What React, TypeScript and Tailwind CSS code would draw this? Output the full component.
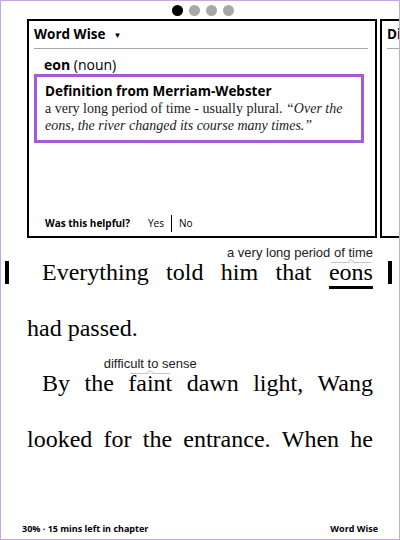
import type { ReactNode } from 'react';

const sans = "font-['Open_Sans',sans-serif]";
const serif = "font-['Liberation_Serif',serif]";

function Gloss({ children, right }: { children: ReactNode; right?: boolean }) {
  return (
    <>
      <span
        className={
          "pointer-events-none absolute top-[1px] whitespace-nowrap font-['Liberation_Sans',sans-serif] text-[13px] leading-[14px] text-[#222] no-underline " +
          (right ? 'right-0' : 'left-1/2 -translate-x-1/2')
        }
      >
        {children}
      </span>
      <span className="absolute inset-x-[2px] top-[17px] h-px bg-[#c4c4c4]" />
      <svg
        className="absolute left-1/2 top-[14px] -translate-x-1/2"
        width="7"
        height="4"
        viewBox="0 0 7 4"
      >
        <path d="M0 3.5 L3.5 0.5 L7 3.5" fill="white" stroke="#bdbdbd" strokeWidth="1" />
      </svg>
    </>
  );
}

function Card({ children, title }: { children?: ReactNode; title: string }) {
  return (
    <div className="flex h-[219px] w-[350px] shrink-0 flex-col border-2 border-black">
      <div className={`flex h-[27px] items-center pl-[5px] ${sans} text-[13.5px] font-bold text-black`}>
        <span>{title}</span>
        {title === 'Word Wise' && <span className="ml-[8px] text-[8px] leading-none">▼</span>}
      </div>
      <div className="ml-[5px] mr-[7px] h-px bg-[#a8a8a8]" />
      {children}
    </div>
  );
}

export default function App() {
  return (
    <div className="flex h-[540px] w-[400px] flex-col overflow-hidden border border-[#c9a6de] bg-white text-black">
      <div className="flex justify-center gap-[6px] pl-[5px] pt-[4px]">
        <span className="h-[11px] w-[11px] rounded-full bg-black" />
        <span className="h-[11px] w-[11px] rounded-full bg-[#a8a8a8]" />
        <span className="h-[11px] w-[11px] rounded-full bg-[#a8a8a8]" />
        <span className="h-[11px] w-[11px] rounded-full bg-[#a8a8a8]" />
      </div>

      <div className="ml-[26px] mt-[3px] flex gap-[3px]">
        <Card title="Word Wise">
          <div className={`ml-[15px] mt-[6px] h-[19px] ${sans} text-[14px] leading-[19px]`}>
            <span className="font-bold">eon</span> (noun)
          </div>
          <div className="ml-[5px] mr-[11px] h-[69px] border-[3px] border-[#a25bd8] pl-[8px] pr-[6px] pt-[5px]">
            <p className={`${sans} text-[13.5px] font-bold leading-[18px]`}>
              Definition from Merriam-Webster
            </p>
            <p className={`${serif} text-[14px] leading-[17px] text-[#1a1a1a]`}>
              a very long period of time - usually plural.{' '}
              <em>“Over the</em>
              <br />
              <em>eons, the river changed its course many times.”</em>
            </p>
          </div>
          <div className={`mt-auto mb-[4px] ml-[16px] flex h-[17px] items-center ${sans} text-[10px]`}>
            <span className="font-bold">Was this helpful?</span>
            <span className="ml-[18px]">Yes</span>
            <span className="mx-[7px] h-[17px] w-px bg-black" />
            <span>No</span>
          </div>
        </Card>
        <Card title="Dictionary" />
      </div>

      <div className={`mt-[7px] ${serif} text-[24px] leading-[55.5px]`}>
        <div className="flex h-[55.5px] items-center">
          <div className="ml-[4px] h-[23px] w-[4px] bg-black" />
          <div className="ml-[33px] flex w-[331px] justify-between">
            <span>Everything</span>
            <span>told</span>
            <span>him</span>
            <span>that</span>
            <span className="relative underline decoration-[2.5px] underline-offset-[6px]">
              eons
              <Gloss right>a very long period of time</Gloss>
            </span>
          </div>
          <div className="ml-[15px] h-[23px] w-[4px] bg-black" />
        </div>
        <div className="h-[55.5px] pl-[26px]">had passed.</div>
        <div className="ml-[41px] flex h-[55.5px] w-[331px] justify-between">
          <span>By</span>
          <span>the</span>
          <span className="relative">
            faint
            <Gloss>difficult to sense</Gloss>
          </span>
          <span>dawn</span>
          <span>light,</span>
          <span>Wang</span>
        </div>
        <div className="ml-[26px] flex h-[55.5px] w-[346px] justify-between">
          <span>looked</span>
          <span>for</span>
          <span>the</span>
          <span>entrance.</span>
          <span>When</span>
          <span>he</span>
        </div>
      </div>

      <div className={`mt-auto flex justify-between pb-[4px] pl-[21px] pr-[21px] ${sans} text-[9px] font-bold leading-[12px]`}>
        <span>30% · 15 mins left in chapter</span>
        <span>Word Wise</span>
      </div>
    </div>
  );
}
